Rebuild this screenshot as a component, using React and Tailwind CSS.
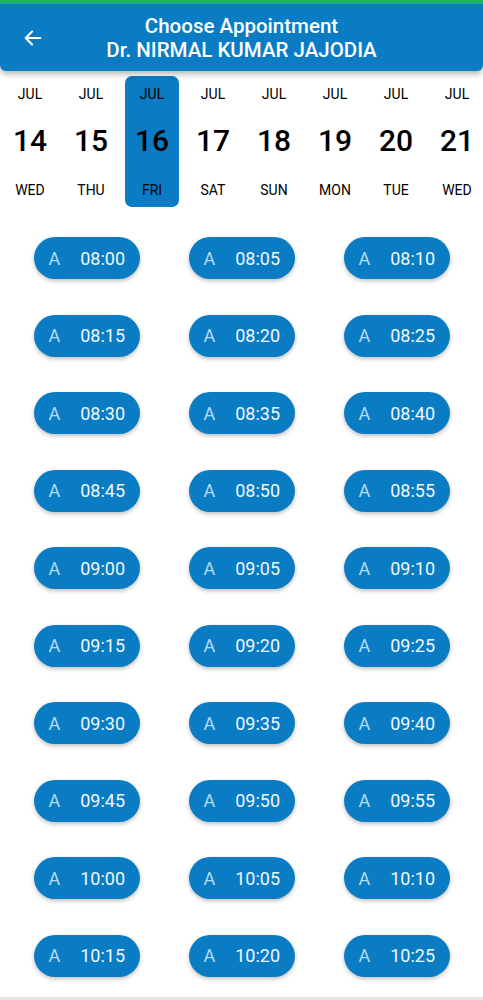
import React from "react";

const days = [
  { d: "14", w: "WED" },
  { d: "15", w: "THU" },
  { d: "16", w: "FRI" },
  { d: "17", w: "SAT" },
  { d: "18", w: "SUN" },
  { d: "19", w: "MON" },
  { d: "20", w: "TUE" },
  { d: "21", w: "WED" },
];

const slots = [];
for (let h = 8; h <= 10; h++) {
  for (let m = 0; m < 60; m += 5) {
    if (h === 10 && m > 25) break;
    slots.push(`${String(h).padStart(2, "0")}:${String(m).padStart(2, "0")}`);
  }
}

const App = () => {
  return (
    <div
      className="w-[483px] h-[1000px] bg-white overflow-hidden flex flex-col"
      style={{ fontFamily: "Roboto, 'Liberation Sans', sans-serif" }}
    >
      <div className="h-[4px] bg-[#22b36b]" />
      <div className="relative z-10 h-[67px] bg-[#0a7cc4] rounded-b-[6px] shadow-[0_3px_6px_rgba(0,0,0,0.3)] flex items-center">
        <div className="w-[66px] flex items-center justify-center">
          <svg width="22" height="22" viewBox="0 0 24 24" fill="none" stroke="white" strokeWidth="2.2" strokeLinecap="round" strokeLinejoin="round">
            <path d="M20 12H4M11 5l-7 7 7 7" />
          </svg>
        </div>
        <div className="flex-1 pr-[66px] text-center text-white font-medium text-[20.5px] leading-[24px]">
          <div>Choose Appointment</div>
          <div>Dr. NIRMAL KUMAR JAJODIA</div>
        </div>
      </div>

      <div className="grid grid-cols-[repeat(8,61px)] ml-[-0.5px] pt-[5px]">
        {days.map((day, i) => (
          <div key={i} className="flex justify-center">
            <div
              className={
                "w-[54px] h-[131px] rounded-[7px] flex flex-col items-center text-black " +
                (i === 2 ? "bg-[#0a7cc4]" : "")
              }
            >
              <div className="mt-[10px] text-[14px] leading-[16px]">JUL</div>
              <div className="mt-[22px] text-[30px] leading-[34px] font-medium">{day.d}</div>
              <div className="mt-[24px] text-[14px] leading-[16px]">{day.w}</div>
            </div>
          </div>
        ))}
      </div>

      <div className="grid grid-cols-3 px-[9px] pt-[30px] gap-y-[35.5px]">
        {slots.map((t) => (
          <div key={t} className="flex justify-center">
            <div className="w-[106px] h-[42px] rounded-full bg-[#0a7cc4] shadow-[0_2px_4px_rgba(0,0,0,0.25)] flex items-center text-[18px]">
              <span className="ml-[15px] text-[#b6dbf3]">A</span>
              <span className="ml-[20px] text-[#eef7fd]">{t}</span>
            </div>
          </div>
        ))}
      </div>
      <div className="flex-1" />
      <div className="h-[3px] bg-[#e5e5e5]" />
    </div>
  );
};

export default App;
